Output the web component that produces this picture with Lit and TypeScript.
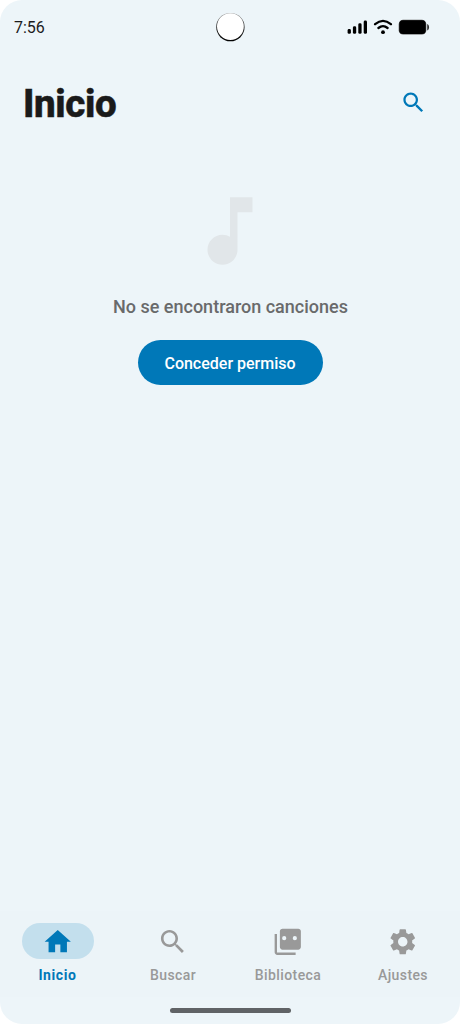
import { LitElement, html, css, svg } from "lit";
import { customElement, property } from "lit/decorators.js";

const icons: Record<string, unknown> = {
  home: svg`<path d="M10 20v-6h4v6h5v-8h3L12 3 2 12h3v8z"/>`,
  search: svg`<path d="M15.5 14h-.79l-.28-.27C15.41 12.59 16 11.11 16 9.5 16 5.91 13.09 3 9.5 3S3 5.91 3 9.5 5.91 16 9.5 16c1.61 0 3.09-.59 4.23-1.57l.27.28v.79l5 4.99L20.49 19l-4.99-5zm-6 0C7.01 14 5 11.99 5 9.5S7.01 5 9.5 5 14 7.01 14 9.5 11.99 14 9.5 14z"/>`,
  library: svg`<path fill-rule="evenodd" d="M8 2h12c1.1 0 2 .9 2 2v12c0 1.1-.9 2-2 2H8c-1.1 0-2-.9-2-2V4c0-1.1.9-2 2-2zM9.3 7.7a1.6 1.6 0 1 0 0 3.2A1.6 1.6 0 1 0 9.3 7.7zM17.4 7.7a1.6 1.6 0 1 0 0 3.2A1.6 1.6 0 1 0 17.4 7.7z"/><path d="M2 6h1.8v14.2H18V22H4c-1.1 0-2-.9-2-2z"/>`,
  settings: svg`<path d="M19.14 12.94c.04-.3.06-.61.06-.94 0-.32-.02-.64-.07-.94l2.03-1.58c.18-.14.23-.41.12-.61l-1.92-3.32c-.12-.22-.37-.29-.59-.22l-2.39.96c-.5-.38-1.03-.7-1.62-.94l-.36-2.54c-.04-.24-.24-.41-.48-.41h-3.84c-.24 0-.43.17-.47.41l-.36 2.54c-.59.24-1.13.57-1.62.94l-2.39-.96c-.22-.08-.47 0-.59.22L2.74 8.87c-.12.21-.08.47.12.61l2.03 1.58c-.05.3-.09.63-.09.94s.02.64.07.94l-2.03 1.58c-.18.14-.23.41-.12.61l1.92 3.32c.12.22.37.29.59.22l2.39-.96c.5.38 1.03.7 1.62.94l.36 2.54c.05.24.24.41.48.41h3.84c.24 0 .44-.17.47-.41l.36-2.54c.59-.24 1.13-.56 1.62-.94l2.39.96c.22.08.47 0 .59-.22l1.92-3.32c.12-.22.07-.47-.12-.61l-2.01-1.58zM12 15.6c-1.98 0-3.6-1.62-3.6-3.6s1.62-3.6 3.6-3.6 3.6 1.62 3.6 3.6-1.62 3.6-3.6 3.6z"/>`,
  note: svg`<path d="M12 3v10.55c-.59-.34-1.27-.55-2-.55-2.21 0-4 1.79-4 4s1.79 4 4 4 4-1.79 4-4V7h4V3h-6z"/>`,
};

@customElement("app-icon")
export class AppIcon extends LitElement {
  @property() name = "home";
  static styles = css`
    :host { display: block; flex: none; }
    .glyph { display: block; width: 100%; height: 100%; fill: currentColor; }
  `;
  render() {
    return html`<svg class="glyph" viewBox="0 0 24 24" aria-hidden="true">${icons[this.name]}</svg>`;
  }
}

@customElement("status-bar")
export class StatusBar extends LitElement {
  static styles = css`
    :host { display: grid; grid-template-columns: 1fr 30px 1fr; align-items: center; height: 54px; padding: 0 30px 0 14px; box-sizing: border-box; }
    .time { padding-top: 1px; font-size: 16px; line-height: 21px; color: #1c1c1c; }
    .camera { display: block; width: 30px; height: 30px; margin-left: 8px; }
    .signals { display: flex; justify-content: flex-end; }
    .indicators { display: block; }
  `;
  render() {
    return html`
      <span class="time">7:56</span>
      <svg class="camera" viewBox="0 0 30 30">
        <defs>
          <linearGradient id="rim" x1="0" y1="0" x2="0" y2="1">
            <stop offset="0" stop-color="#999"/>
            <stop offset="0.4" stop-color="#333"/>
            <stop offset="1" stop-color="#000"/>
          </linearGradient>
        </defs>
        <circle cx="15.4" cy="15.1" r="14.2" fill="url(#rim)"/>
        <circle cx="15.4" cy="14.6" r="13.4" fill="#fff"/>
      </svg>
      <div class="signals">
        <svg class="indicators" width="83" height="16" viewBox="0 0 83 16">
          <rect x="0.6" y="10" width="3.3" height="4.8" rx="1.4"/>
          <rect x="5.9" y="7.3" width="3.3" height="7.5" rx="1.4"/>
          <rect x="11.3" y="4.3" width="3.3" height="10.5" rx="1.4"/>
          <rect x="16.7" y="1.6" width="3.3" height="13.2" rx="1.4"/>
          <g fill="none" stroke="#000" stroke-width="2.3" stroke-linecap="round">
            <path d="M28.1 5.2Q36 -1.4 43.9 5.2"/>
            <path d="M31.4 9Q36 5.2 40.6 9"/>
          </g>
          <circle cx="36" cy="13.2" r="1.9"/>
          <rect x="51.7" y="0.7" width="27.6" height="14.9" rx="4.4" fill="#555"/>
          <rect x="52.3" y="1.3" width="26.4" height="13.7" rx="3.8"/>
          <path d="M80.2 5c2.5.6 2.5 5.8 0 6.4z" fill="#333"/>
        </svg>
      </div>
    `;
  }
}

@customElement("nav-item")
export class NavItem extends LitElement {
  @property() icon = "home";
  @property() label = "";
  @property({ type: Boolean, reflect: true }) active = false;
  static styles = css`
    :host { display: flex; flex-direction: column; align-items: center; color: #999; }
    :host([active]) { color: #0078b8; }
    .pill { display: grid; place-items: center; width: 72px; height: 36px; border-radius: 18px; }
    :host([active]) .pill { background: #c3dfed; }
    .icon { width: 31.5px; height: 31.5px; padding-top: 0.8px; }
    .label { margin-top: 7px; padding-left: 1px; font-size: 14px; line-height: 18px; font-weight: 500; letter-spacing: 0.4px; }
    :host([active]) .label { padding-left: 0; font-weight: 700; letter-spacing: 0.6px; }
  `;
  render() {
    return html`
      <div class="pill"><app-icon class="icon" name=${this.icon}></app-icon></div>
      <span class="label">${this.label}</span>
    `;
  }
}

const tabs = [
  { icon: "home", label: "Inicio", active: true },
  { icon: "search", label: "Buscar", active: false },
  { icon: "library", label: "Biblioteca", active: false },
  { icon: "settings", label: "Ajustes", active: false },
];

@customElement("app-root")
export class AppRoot extends LitElement {
  static styles = css`
    :host { display: block; height: 1024px; background: #fff; font-family: Roboto, sans-serif; }
    .screen { display: flex; flex-direction: column; height: 100%; border-radius: 22px; overflow: hidden; background: #edf5f9; }
    .header { display: flex; justify-content: space-between; align-items: center; height: 97px; padding: 0 33px 0 23px; }
    .title { margin: 0; padding-top: 2px; font-size: 38.5px; line-height: 48px; font-weight: 800; letter-spacing: -0.4px; color: #1a1a1a; -webkit-text-stroke: 0.5px #1a1a1a; }
    .action { width: 27px; height: 27px; color: #0078b8; }
    .empty { flex: 1; display: flex; flex-direction: column; align-items: center; padding-top: 35px; }
    .note { width: 90px; height: 90px; color: #e1e6e9; }
    .message { margin: 19px 0 0; padding-left: 1px; font-size: 18px; line-height: 24px; font-weight: 500; color: #696a6b; }
    .grant { margin-top: 21px; width: 185px; height: 45px; padding: 2px 0 0; border: 0; border-radius: 23px; background: #0078b8; color: #fff; font: 500 16px/20px Roboto, sans-serif; }
    .nav { display: grid; grid-template-columns: repeat(4, 1fr); box-sizing: border-box; height: 86px; padding: 12px 0 0; background: #ecf4f8; }
    .gesture { display: flex; justify-content: center; align-items: center; height: 27px; }
    .handle { width: 121px; height: 5px; border-radius: 3px; background: #606366; }
  `;
  render() {
    return html`
      <div class="screen">
        <status-bar></status-bar>
        <header class="header">
          <h1 class="title">Inicio</h1>
          <app-icon class="action" name="search"></app-icon>
        </header>
        <main class="empty">
          <app-icon class="note" name="note"></app-icon>
          <p class="message">No se encontraron canciones</p>
          <button class="grant">Conceder permiso</button>
        </main>
        <nav class="nav">
          ${tabs.map((t) => html`<nav-item icon=${t.icon} label=${t.label} ?active=${t.active}></nav-item>`)}
        </nav>
        <div class="gesture"><div class="handle"></div></div>
      </div>
    `;
  }
}
